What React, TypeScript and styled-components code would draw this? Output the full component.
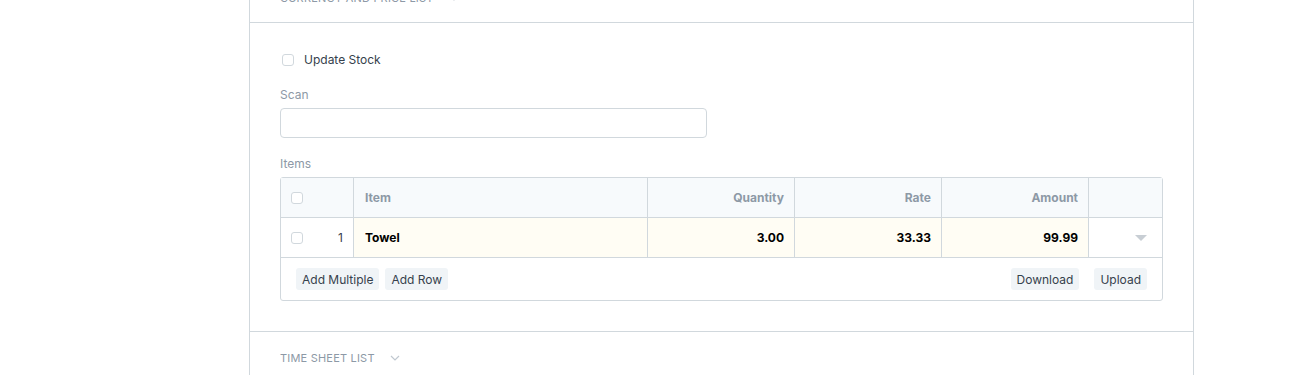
import styled, { createGlobalStyle } from "styled-components";

const GlobalStyle = createGlobalStyle`
  body {
    margin: 0;
    background: #fff;
    font-family: Inter, "Liberation Sans", sans-serif;
    font-size: 12px;
    color: #36414c;
  }
`;

const Page = styled.div`
  display: grid;
  grid-template-columns: 249px 945px;
  height: 375px;
  overflow: hidden;
`;

const Card = styled.div`
  margin-top: -28px;
  border-left: 1px solid #d1d8dd;
  border-right: 1px solid #d1d8dd;
`;

const SectionHead = styled.div`
  display: flex;
  align-items: center;
  gap: 15px;
  padding: 18px 30px 16px;
  font-size: 11px;
  line-height: 16px;
  letter-spacing: 0.2px;
  text-transform: uppercase;
  color: #8d99a6;
  border-bottom: 1px solid #d1d8dd;
`;

const Section = styled.div`
  padding: 28px 30px 30px;
  border-bottom: 1px solid #d1d8dd;
`;

const Check = styled.span`
  display: inline-block;
  width: 10px;
  height: 10px;
  border: 1px solid #d1d8dd;
  border-radius: 3px;
  background: #fff;
`;

const CheckRow = styled.label`
  display: flex;
  align-items: center;
  gap: 10px;
  padding-left: 2px;
  line-height: 18px;
  margin-bottom: 17px;
`;

const Label = styled.div`
  color: #8d99a6;
  line-height: 18px;
  margin-bottom: 4px;
`;

const Input = styled.div`
  width: 425px;
  height: 28px;
  border: 1px solid #d1d8dd;
  border-radius: 4px;
  margin-bottom: 17px;
`;

const Grid = styled.div`
  border: 1px solid #d1d8dd;
  border-radius: 3px;
`;

const Row = styled.div<{ $head?: boolean }>`
  display: grid;
  grid-template-columns: 72px 294px 147px 147px 147px 74px;
  height: 39px;
  border-bottom: 1px solid #d1d8dd;
  background: ${(p) => (p.$head ? "#f7fafc" : "#fff")};
  font-weight: 700;
  color: ${(p) => (p.$head ? "#8d99a6" : "#000")};
`;

const Cell = styled.div<{ $right?: boolean; $edit?: boolean }>`
  display: flex;
  align-items: center;
  justify-content: ${(p) => (p.$right ? "flex-end" : "flex-start")};
  padding: 0 10px 0 11px;
  border-left: 1px solid #d1d8dd;
  background: ${(p) => (p.$edit ? "#fffdf4" : "transparent")};
  &:first-child {
    border-left: none;
    padding: 0 10px;
    justify-content: space-between;
    font-weight: 400;
    color: #36414c;
  }
`;

const Caret = styled.span`
  width: 0;
  height: 0;
  border-left: 6px solid transparent;
  border-right: 6px solid transparent;
  border-top: 6px solid #c8ced4;
  margin-right: 5px;
`;

const Footer = styled.div`
  display: flex;
  justify-content: space-between;
  padding: 10px 15px;
`;

const BtnGroup = styled.div<{ $gap: number }>`
  display: flex;
  gap: ${(p) => p.$gap}px;
`;

const Btn = styled.button`
  height: 22px;
  padding: 0 6px;
  border: none;
  border-radius: 3px;
  background: #f0f4f7;
  color: #36414c;
  font-family: inherit;
  font-size: 12px;
`;

const Chevron = () => (
  <svg width="10" height="6" viewBox="0 0 10 6">
    <polyline points="1,1 5,5 9,1" fill="none" stroke="#c0c8d0" strokeWidth="1.2" />
  </svg>
);

const columns = [
  { label: "Item" },
  { label: "Quantity", right: true },
  { label: "Rate", right: true },
  { label: "Amount", right: true },
];

export default function App() {
  return (
    <>
      <GlobalStyle />
      <Page>
        <div />
        <Card>
          <SectionHead>
            Currency and Price List <Chevron />
          </SectionHead>
          <Section>
            <CheckRow>
              <Check />
              Update Stock
            </CheckRow>
            <Label>Scan</Label>
            <Input />
            <Label>Items</Label>
            <Grid>
              <Row $head>
                <Cell>
                  <Check />
                </Cell>
                {columns.map((c) => (
                  <Cell key={c.label} $right={c.right}>
                    {c.label}
                  </Cell>
                ))}
                <Cell />
              </Row>
              <Row>
                <Cell>
                  <Check />
                  <span>1</span>
                </Cell>
                <Cell $edit>Towel</Cell>
                <Cell $edit $right>3.00</Cell>
                <Cell $edit $right>33.33</Cell>
                <Cell $edit $right>99.99</Cell>
                <Cell $right>
                  <Caret />
                </Cell>
              </Row>
              <Footer>
                <BtnGroup $gap={6}>
                  <Btn>Add Multiple</Btn>
                  <Btn>Add Row</Btn>
                </BtnGroup>
                <BtnGroup $gap={15}>
                  <Btn>Download</Btn>
                  <Btn>Upload</Btn>
                </BtnGroup>
              </Footer>
            </Grid>
          </Section>
          <SectionHead>
            Time Sheet List <Chevron />
          </SectionHead>
        </Card>
      </Page>
    </>
  );
}
